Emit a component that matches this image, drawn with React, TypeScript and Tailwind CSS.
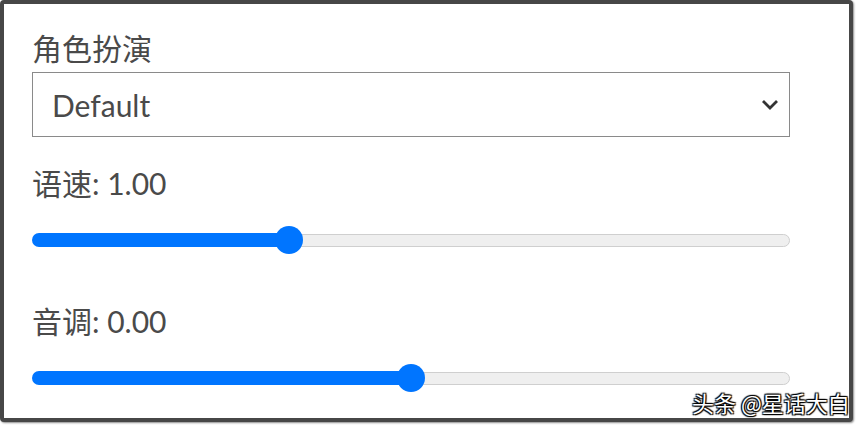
import React from "react";

function Slider({ fraction }: { fraction: number }) {
  const usable = 730;
  const center = 14 + usable * fraction;
  return (
    <div className="flex h-7 w-[758px] items-center">
      <div className="h-[14px] shrink-0 rounded-l-full bg-[#0075ff]" style={{ width: center }} />
      <div className="relative z-10 -mx-[14px] h-7 w-7 shrink-0 rounded-full bg-[#0075ff]" />
      <div className="h-[13px] flex-1 rounded-r-full border border-[#cfcfcf] bg-[#efefef]" />
    </div>
  );
}

export default function App() {
  const font = { fontFamily: '"Lato", "Noto Sans CJK SC", sans-serif' };
  return (
    <div className="relative h-[427px] w-[865px] bg-white" style={font}>
      <div className="flex h-[422px] w-[853px] flex-col rounded-[4px] border-4 border-[#474747] bg-white pl-[28px] pt-[26px] shadow-[1px_1px_2px_rgba(0,0,0,0.45)]">
        <div className="text-[30px] leading-[36px] text-[#4a4a4a]">角色扮演</div>
        <div className="mt-[6px] flex h-[65px] w-[758px] items-center justify-between border-[1.5px] border-[#8a8a8a] pl-[19px] pr-[10px]">
          <span className="text-[30px] leading-[36px] text-[#4a4a4a]">Default</span>
          <svg width="18" height="12" viewBox="0 0 18 12">
            <polyline points="2,2 9,9 16,2" fill="none" stroke="#333" strokeWidth="2.8" />
          </svg>
        </div>
        <div className="mt-[28px] text-[30px] leading-[36px] text-[#4a4a4a]">语速: 1.00</div>
        <div className="mt-[25px]">
          <Slider fraction={1 / 3} />
        </div>
        <div className="mt-[49px] text-[30px] leading-[36px] text-[#4a4a4a]">音调: 0.00</div>
        <div className="mt-[25px]">
          <Slider fraction={0.5} />
        </div>
      </div>
      <div
        className="absolute left-[692px] top-[388px] text-[22px] leading-[28px] text-white [text-shadow:0_0_1px_#000,1px_1px_1px_#000,-1px_-1px_1px_#000,1px_-1px_1px_#000,-1px_1px_1px_#000]"
        style={{ fontFamily: '"Noto Sans CJK SC", sans-serif' }}
      >
        头条 @星话大白
      </div>
    </div>
  );
}
